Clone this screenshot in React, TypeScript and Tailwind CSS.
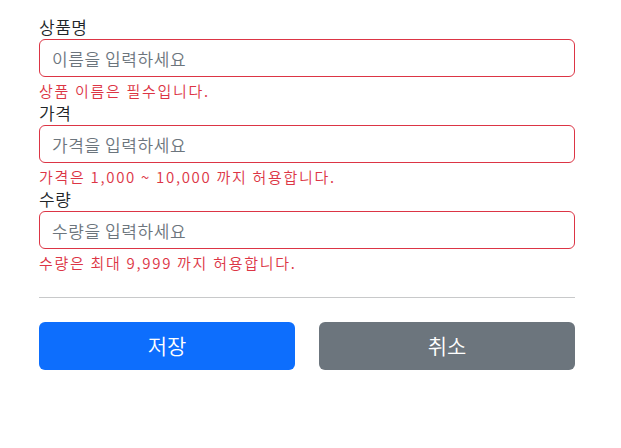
import React from "react";

const font = { fontFamily: '"Noto Sans CJK KR", "Noto Sans", sans-serif' };

function Field({ label, placeholder, error }: { label: string; placeholder: string; error: string }) {
  return (
    <div className="flex flex-col">
      <label className="h-[24px] text-[17px] leading-[24px] tracking-[0.5px] font-[350] text-[#212529]">{label}</label>
      <input
        className="h-[38px] w-full rounded-[6px] border border-[#dc3545] px-[12px] text-[17px] leading-[24px] tracking-[0.6px] font-[350] text-[#212529] placeholder:text-[#6c757d] outline-none"
        placeholder={placeholder}
        style={font}
      />
      <div className="mt-[4px] h-[20px] text-[15px] leading-[20px] tracking-[1.7px] font-[350] text-[#dc3545]">{error}</div>
    </div>
  );
}

export default function App() {
  return (
    <div className="min-h-[448px] bg-white" style={font}>
      <div className="ml-[39px] w-[536px] pt-[15px]">
        <Field label="상품명" placeholder="이름을 입력하세요" error="상품 이름은 필수입니다." />
        <Field label="가격" placeholder="가격을 입력하세요" error="가격은 1,000 ~ 10,000 까지 허용합니다." />
        <Field label="수량" placeholder="수량을 입력하세요" error="수량은 최대 9,999 까지 허용합니다." />
        <div className="mt-[24px] h-px bg-[#c8c9ca]" />
        <div className="mt-[24px] grid grid-cols-2 gap-[24px]">
          <button className="h-[48px] rounded-[6px] bg-[#0d6efd] text-[21px] font-[350] text-white" style={font}>저장</button>
          <button className="h-[48px] rounded-[6px] bg-[#6c757d] text-[21px] font-[350] text-white" style={font}>취소</button>
        </div>
      </div>
    </div>
  );
}
